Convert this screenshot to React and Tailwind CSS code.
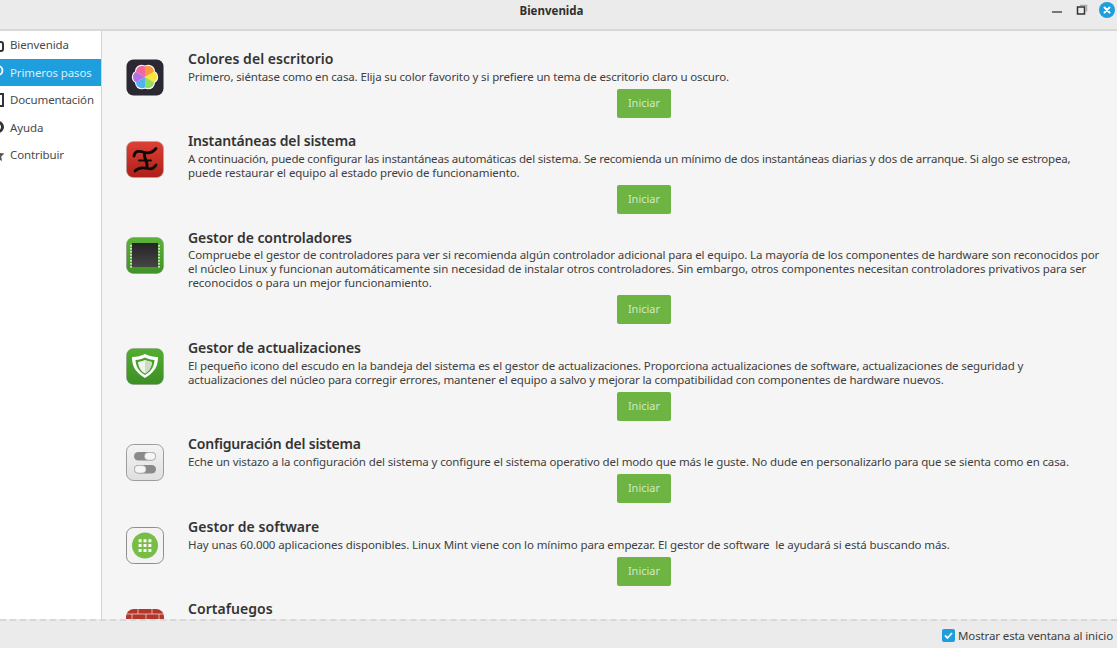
const items = [
  { id: "colors", t: "Colores del escritorio", tt: "tracking-[0.05px]", gap: "mb-[14px]", d: [["Primero, siéntase como en casa. Elija su color favorito y si prefiere un tema de escritorio claro u oscuro.", "tracking-[-0.14px]"]] },
  { id: "snap", t: "Instantáneas del sistema", tt: "tracking-[-0.14px]", gap: "mb-[15px]", d: [["A continuación, puede configurar las instantáneas automáticas del sistema. Se recomienda un mínimo de dos instantáneas diarias y dos de arranque. Si algo se estropea,", "tracking-[-0.19px]"], ["puede restaurar el equipo al estado previo de funcionamiento.", "tracking-[-0.09px]"]] },
  { id: "driver", t: "Gestor de controladores", tt: "tracking-[-0.05px]", gap: "mb-[15px]", tight: true, d: [["Compruebe el gestor de controladores para ver si recomienda algún controlador adicional para el equipo. La mayoría de los componentes de hardware son reconocidos por", "tracking-[-0.11px]"], ["el núcleo Linux y funcionan automáticamente sin necesidad de instalar otros controladores. Sin embargo, otros componentes necesitan controladores privativos para ser", "tracking-[-0.09px]"], ["reconocidos o para un mejor funcionamiento.", "tracking-[-0.07px]"]] },
  { id: "update", t: "Gestor de actualizaciones", tt: "tracking-[-0.06px]", gap: "mb-[14px]", d: [["El pequeño icono del escudo en la bandeja del sistema es el gestor de actualizaciones. Proporciona actualizaciones de software, actualizaciones de seguridad y", "tracking-[-0.13px]"], ["actualizaciones del núcleo para corregir errores, mantener el equipo a salvo y mejorar la compatibilidad con componentes de hardware nuevos.", "tracking-[-0.14px]"]] },
  { id: "settings", t: "Configuración del sistema", tt: "tracking-[-0.18px]", gap: "mb-[15px]", d: [["Eche un vistazo a la configuración del sistema y configure el sistema operativo del modo que más le guste. No dude en personalizarlo para que se sienta como en casa.", "tracking-[-0.124px]"]] },
  { id: "software", t: "Gestor de software", tt: "tracking-[0.06px]", gap: "mb-[14px]", d: [["Hay unas 60.000 aplicaciones disponibles. Linux Mint viene con lo mínimo para empezar. El gestor de software  le ayudará si está buscando más.", "tracking-[-0.11px]"]] },
  { id: "firewall", t: "Cortafuegos", tt: "tracking-[0.05px]", gap: "", d: [] },
];

function Icon({ id }) {
  const c = { className: "w-[38px] h-[37px] block", viewBox: "0 0 38 37" };
  if (id === "colors") {
    const cols = ["#fb9b3c", "#fbe53c", "#96dd5e", "#4fb3ee", "#b26fe6", "#f0689c"];
    const pt = (deg, r) => { const a = deg * Math.PI / 180; return (19 + r * Math.cos(a)) + " " + (18 + r * Math.sin(a)); };
    const centers = [0, 1, 2, 3, 4, 5].map((i) => (i * 60 - 60) * Math.PI / 180);
    return (
      <svg {...c}>
        <defs>
          <clipPath id="fl">
            {centers.map((a, i) => <circle key={i} cx={19 + 6 * Math.cos(a)} cy={18 + 6 * Math.sin(a)} r="6" />)}
          </clipPath>
        </defs>
        <rect x="0.5" y="0.5" width="37" height="36" rx="7" fill="#2b2733" />
        {centers.map((a, i) => <circle key={i} cx={19 + 6.6 * Math.cos(a)} cy={18 + 6.6 * Math.sin(a)} r="6.6" fill="#fff" />)}
        <g clipPath="url(#fl)">
          {cols.map((k, i) => <path key={i} d={"M19 18L" + pt(i * 60 - 90, 20) + "L" + pt(i * 60 - 60, 20) + "L" + pt(i * 60 - 30, 20) + "Z"} fill={k} />)}
        </g>
      </svg>
    );
  }
  if (id === "snap") {
    return (
      <svg {...c}>
        <defs><linearGradient id="r" x1="0" y1="0" x2="0" y2="1"><stop offset="0" stopColor="#de4035" /><stop offset="1" stopColor="#ad1f18" /></linearGradient></defs>
        <rect x="0.5" y="0.5" width="37" height="36" rx="7" fill="url(#r)" stroke="#a8a8a8" strokeOpacity="0.6" />
        <g fill="none" stroke="#0d0a08" strokeLinecap="round">
          <path d="M8 15C9 9 14 10 19 11.500C23 12.500 27 11 30 7.500" strokeWidth="2.800" />
          <path d="M19 11.500C16.500 16 22 20 21 25.500" strokeWidth="3" />
          <path d="M13 19.500H25" strokeWidth="1.800" />
          <path d="M9 30C13 25.500 18 26.500 22 27.500C25 28.500 28 27 30 24" strokeWidth="2.800" />
        </g>
      </svg>
    );
  }
  if (id === "driver") {
    return (
      <svg {...c}>
        <defs>
          <linearGradient id="g" x1="0" y1="0" x2="0" y2="1"><stop offset="0" stopColor="#5cb338" /><stop offset="1" stopColor="#3f9226" /></linearGradient>
          <linearGradient id="ch" x1="0" y1="0" x2="0" y2="1"><stop offset="0" stopColor="#242424" /><stop offset="1" stopColor="#454545" /></linearGradient>
        </defs>
        <rect x="0.5" y="0.5" width="37" height="36" rx="7" fill="url(#g)" stroke="#888" strokeOpacity="0.5" />
        <rect x="6" y="6" width="26" height="24" fill="url(#ch)" />
        {[0, 1, 2, 3, 4, 5, 6, 7].map((i) => (
          <g key={i} fill="#e8f2df">
            <rect x="4.200" y={8 + i * 3} width="1.600" height="1.600" />
            <rect x="32.200" y={8 + i * 3} width="1.600" height="1.600" />
          </g>
        ))}
      </svg>
    );
  }
  if (id === "update") {
    return (
      <svg {...c}>
        <defs><linearGradient id="g2" x1="0" y1="0" x2="0" y2="1"><stop offset="0" stopColor="#52ae2f" /><stop offset="1" stopColor="#3b8f25" /></linearGradient></defs>
        <rect x="0.5" y="0.5" width="37" height="36" rx="7" fill="url(#g2)" stroke="#888" strokeOpacity="0.4" />
        <path d="M19 6c4 2 8 3 13 3 0 9-3 15-13 21C9 24 6 18 6 9c5 0 9-1 13-3z" fill="#fff" />
        <path d="M19 9.500c3 1.500 6 2.200 9.500 2.400-.4 6.500-3 11-9.500 15-6.500-4-9.100-8.500-9.500-15 3.500-.2 6.500-.9 9.500-2.400z" fill="#46a02a" />
        <path d="M19 12c2.300 1.100 4.700 1.700 7 1.900-.4 5-2.500 8.700-7 11.600-4.500-2.900-6.600-6.600-7-11.600 2.300-.2 4.700-.8 7-1.900z" fill="#f2f2ee" />
        <path d="M19 12c2.300 1.100 4.700 1.700 7 1.900-.4 5-2.500 8.700-7 11.600z" fill="#c9dfc0" />
      </svg>
    );
  }
  if (id === "settings") {
    return (
      <svg {...c}>
        <defs><linearGradient id="s" x1="0" y1="0" x2="0" y2="1"><stop offset="0" stopColor="#f4f4f4" /><stop offset="1" stopColor="#dfdfdf" /></linearGradient></defs>
        <rect x="0.5" y="0.5" width="37" height="36" rx="7" fill="url(#s)" stroke="#9c9c9c" />
        <rect x="8" y="8" width="22" height="8.500" rx="4.250" fill="#8a8a8a" />
        <rect x="18.500" y="8.500" width="11" height="7.500" rx="3.750" fill="#f5f5f5" stroke="#aaa" strokeWidth="0.5" />
        <rect x="8" y="21" width="22" height="8.500" rx="4.250" fill="#8a8a8a" />
        <rect x="8.500" y="21.500" width="11.500" height="7.500" rx="3.750" fill="#f5f5f5" stroke="#aaa" strokeWidth="0.5" />
      </svg>
    );
  }
  if (id === "software") {
    const dots = [];
    for (let y = 0; y < 3; y++) for (let x = 0; x < 3; x++) dots.push(<rect key={x + "-" + y} x={12.600 + x * 4.900} y={12.200 + y * 4.900} width="3" height="3" rx="0.5" fill="#fff" />);
    return (
      <svg {...c}>
        <rect x="0.5" y="0.5" width="37" height="36" rx="7" fill="#f3f3f3" stroke="#8f8f8f" />
        <circle cx="19" cy="18.500" r="13" fill="#78bd45" />
        {dots}
      </svg>
    );
  }
  return (
    <svg {...c}>
      <rect x="0" y="0" width="38" height="37" rx="8" fill="#b5352a" />
      <g stroke="#e9d5cc" strokeWidth="0.8">
        <path d="M0 5h38M0 11h38" />
        <path d="M12 0v5M26 0v5M6 5v6M20 5v6M33 5v6" />
      </g>
    </svg>
  );
}

function Section({ item }) {
  return (
    <section className={"flex items-start " + item.gap}>
      <div className={"w-[86px] pl-[24px] shrink-0 " + (item.tight ? "pt-[8px]" : "pt-[9px]")}><Icon id={item.id} /></div>
      <div className="flex-1 flex flex-col">
        <h2 className={"h-[18px] leading-[18px] text-[14px] font-semibold text-[#333333] whitespace-nowrap " + item.tt}>{item.t}</h2>
        <div className={"text-[11.5px] leading-[14px] text-[#404040] " + (item.tight ? "mt-[1px]" : "mt-[2px]")}>
          {item.d.map(([l, tr], i) => <p key={i} className={"h-[14px] whitespace-pre " + tr}>{l}</p>)}
        </div>
        {item.d.length > 0 && (
          <div className="mt-[5px] flex justify-center w-[912px]">
            <button className="w-[54px] h-[29px] rounded-[2px] bg-[#6db442] text-[#d3e9c3] text-[11px] flex items-center justify-center">Iniciar</button>
          </div>
        )}
      </div>
    </section>
  );
}

const Home = () => (<svg width="16" height="16" viewBox="0 0 16 16" fill="none" stroke="#333" strokeWidth="2"><rect x="3" y="5" width="10" height="9" rx="2" /></svg>);
const Rocket = () => (<svg width="16" height="16" viewBox="0 0 16 16" fill="none" stroke="#fff" strokeWidth="1.800"><circle cx="8" cy="6.500" r="4.500" /></svg>);
const Doc = () => (<svg width="16" height="16" viewBox="0 0 16 16" fill="none" stroke="#333" strokeWidth="2"><path d="M3 2h10v12H3z" /></svg>);
const Help = () => (<svg width="16" height="16" viewBox="0 0 16 16" fill="none" stroke="#333" strokeWidth="3"><circle cx="8" cy="8" r="4.500" /></svg>);
const Star = () => (<svg width="16" height="16" viewBox="0 0 16 16" fill="#555"><path d="M8 2l2 4 4.500.6-3.300 3 .8 4.400L8 11.800 4 14l.8-4.400-3.300-3L6 6z" /></svg>);

const nav = [
  ["Bienvenida", Home],
  ["Primeros pasos", Rocket],
  ["Documentación", Doc],
  ["Ayuda", Help],
  ["Contribuir", Star],
];

export default function App() {
  return (
    <div className="w-[1117px] h-[648px] flex flex-col overflow-hidden bg-[#f5f5f5] font-['Noto_Sans',sans-serif]">
      <header className="h-[31px] shrink-0 bg-[#ebebeb] border-b-2 border-[#d8d8d8] flex relative">
        <div className="flex-1 text-center text-[11.5px] font-bold text-[#2f2f2f] pr-[14px] pt-[2px]">Bienvenida</div>
        <div className="absolute right-[2px] top-[2px] flex items-center">
          <div className="w-[10px] h-[2px] bg-[#777] mr-[14px] mt-[3px]" />
          <svg width="12" height="12" viewBox="0 0 12 12" className="mr-[11px]" fill="none"><path d="M4 1.500h6.500v6" stroke="#aaa" strokeWidth="1.500" /><rect x="1.500" y="3" width="7" height="7" stroke="#333" strokeWidth="1.500" /></svg>
          <svg width="16" height="16" viewBox="0 0 16 16"><circle cx="8" cy="8" r="8" fill="#1f9ede" /><path d="M5.500 5.500l5 5M10.500 5.500l-5 5" stroke="#fff" strokeWidth="2" strokeLinecap="round" /></svg>
        </div>
      </header>
      <div className="flex-1 flex min-h-0 relative">
        <aside className="w-[102px] shrink-0 bg-white border-r border-[#d4d4d4] overflow-hidden">
          {nav.map(([label, I], i) => (
            <div key={label} className={"h-[27.5px] flex items-center text-[11.5px] whitespace-nowrap " + (i === 1 ? "bg-[#1f9ede] text-[#d8effb]" : "text-[#4a4a4a]")}>
              <div className="w-[16px] ml-[-10px] mr-[4px] shrink-0"><I /></div>
              <span className="tracking-[-0.12px]">{label}</span>
            </div>
          ))}
        </aside>
        <main className="flex-1 overflow-hidden pt-[19px] flex flex-col">
          {items.map((it) => <Section key={it.id} item={it} />)}
        </main>
      </div>
      <footer className="h-[29px] shrink-0 bg-[#ebebeb] border-t-2 border-dashed border-[#d8d8d8] flex items-center justify-end pr-[4px]">
        <svg width="13" height="13" viewBox="0 0 13 13" className="mr-[3px] mt-[2px]"><rect width="13" height="13" rx="2" fill="#1f9ede" /><path d="M3 6.500l2.500 2.500 4.500-5" stroke="#fff" strokeWidth="1.800" fill="none" /></svg>
        <span className="text-[11.5px] text-[#404040] tracking-[-0.13px] mt-[2px]">Mostrar esta ventana al inicio</span>
      </footer>
    </div>
  );
}
